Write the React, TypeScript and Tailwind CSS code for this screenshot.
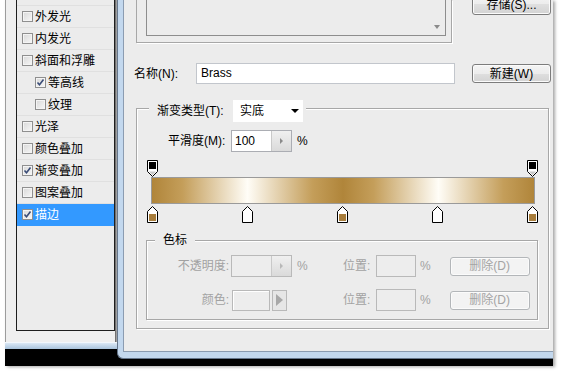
import clsx from "clsx";
import type { ReactNode } from "react";

const layers = [
  { label: "外发光" },
  { label: "内发光" },
  { label: "斜面和浮雕" },
  { label: "等高线", sub: true, checked: true },
  { label: "纹理", sub: true },
  { label: "光泽" },
  { label: "颜色叠加" },
  { label: "渐变叠加", checked: true },
  { label: "图案叠加" },
  { label: "描边", checked: true, selected: true },
];

const brass = "#b0853a";

function CheckBox({ checked }: { checked?: boolean }) {
  return (
    <span className="flex h-[11px] w-[11px] shrink-0 items-center justify-center border border-[#8f8f8f] bg-gradient-to-br from-[#d8d8d8] to-[#f7f7f7] shadow-[inset_0_0_0_1px_#f4f4f4]">
      {checked && (
        <svg width="9" height="9" viewBox="0 0 9 9">
          <path d="M1.5 4.5 L3.5 6.8 L7.5 1.5" fill="none" stroke="#3b4d78" strokeWidth="1.6" />
        </svg>
      )}
    </span>
  );
}

function WinButton({ children, disabled, className }: { children: ReactNode; disabled?: boolean; className?: string }) {
  return (
    <div
      className={clsx(
        "flex items-center justify-center rounded-[3px] border leading-none shadow-[inset_0_0_0_1px_#fbfbfb]",
        disabled
          ? "border-[#b3b6b9] bg-[#f3f3f3] text-[#a4a4a4]"
          : "border-[#7c7c7c] bg-[linear-gradient(#f4f4f4,#ececec_50%,#dfdfdf_50%,#d3d3d3)] text-black",
        className
      )}
    >
      {children}
    </div>
  );
}

function OpacityStop() {
  return (
    <svg width="11" height="17" viewBox="0 0 11 17">
      <path d="M0.5 0.5 H10.5 V11.5 L5.5 16.5 L0.5 11.5 Z" fill="#fff" stroke="#000" />
      <rect x="2" y="2" width="7" height="7" fill="#000" />
      <path d="M2 11.5 H9 L5.5 15 Z" fill="#c8c8c8" />
    </svg>
  );
}

function ColorStop({ color }: { color: string }) {
  return (
    <svg width="11" height="17" viewBox="0 0 11 17">
      <path d="M5.5 0.5 L10.5 5.5 V16.5 H0.5 V5.5 Z" fill="#fff" stroke="#000" />
      <rect x="2" y="8" width="7" height="7" fill={color} />
    </svg>
  );
}

function Spinner({ disabled }: { disabled?: boolean }) {
  return (
    <div className="flex h-full w-[20px] items-center justify-center border-l border-[#c9c9c9] bg-gradient-to-b from-[#f0f0f0] to-[#dadada]">
      <span className={clsx("h-0 w-0 border-y-[3px] border-l-[3px] border-y-transparent", disabled ? "border-l-[#b8b8b8]" : "border-l-[#8a8a8a]")} />
    </div>
  );
}

export default function App() {
  return (
    <div className="h-[372px] w-[562px] overflow-hidden bg-white font-['Liberation_Sans','Noto_Sans_CJK_SC',sans-serif] text-[12px] text-black">
      <div className="ml-[5px] flex h-[366px] w-[548px] bg-black shadow-[2px_1px_3px_rgba(0,0,0,0.35)]">
        {/* layer style dialog, left part */}
        <div className="flex w-[112px] flex-col">
          <div className="flex h-[342px] border-l border-[#9c9c9c] bg-[#efefef] pl-[10px]">
            <div className="h-[331px] w-[99px] border-x border-b border-[#1e1e1e] bg-[#ececec]">
              <div className="h-[6px] border-b border-[#e0e0e0]" />
              {layers.map((l) => (
                <div
                  key={l.label}
                  className={clsx(
                    "flex h-[22px] items-center gap-[2px] border-b",
                    l.sub ? "pl-[18px]" : "pl-[5px]",
                    l.selected ? "border-[#3399ff] bg-[#3399ff] text-white" : "border-[#e0e0e0]"
                  )}
                >
                  <CheckBox checked={l.checked} />
                  <span className="text-[12px]">{l.label}</span>
                </div>
              ))}
            </div>
            <div className="h-[342px] w-[2px] bg-gradient-to-r from-[#5a5a5a] to-[#b9b9b9]" />
          </div>
          <div className="h-[7px] border-t border-[#f2f7fc] bg-gradient-to-b from-[#dbe8f5] to-[#a9c3dc]" />
        </div>

        {/* gradient editor window */}
        <div className="flex w-[436px] flex-col">
          <div className="flex h-[359px] flex-col rounded-bl-[6px] border-b border-l border-[#66778c] bg-[#c3d8ee] pb-[6px] pl-[5px]">
            <div className="flex h-[352px] flex-col border-b border-l border-[#8b9cb1] bg-[#ececec]">
              {/* presets + save */}
              <div className="flex items-start">
                <div className="ml-[12px] h-[43px] w-[316px] border-x border-b border-[#a7a7a7] shadow-[1px_1px_0_#fff]">
                  <div className="ml-[9px] flex h-[36px] w-[300px] items-end justify-end border-x border-b border-[#8d8d8d] pb-[6px] pr-[5px]">
                    <span className="h-0 w-0 border-x-[3px] border-t-[4px] border-x-transparent border-t-[#8a8a8a]" />
                  </div>
                </div>
                <WinButton className="-mt-[6px] ml-[20px] h-[21px] w-[79px]">存储(S)...</WinButton>
              </div>

              {/* name */}
              <div className="mt-[20px] flex h-[21px] items-center">
                <span className="ml-[10px] w-[62px]">名称(N):</span>
                <div className="h-[21px] w-[259px] border border-[#c2c6cc] bg-white pl-[4px] leading-[19px]">Brass</div>
                <WinButton className="ml-[17px] h-[19px] w-[79px]">新建(W)</WinButton>
              </div>

              {/* gradient group */}
              <div className="ml-[12px] mt-[24px] flex h-[221px] w-[413px] flex-col border border-[#a7a7a7] shadow-[inset_1px_1px_0_#fff,1px_1px_0_#fff]">
                <div className="-mt-[9px] ml-[12px] flex h-[22px] w-fit items-center bg-[#ececec] pl-[8px] pr-[3px]">
                  <span className="w-[76px]">渐变类型(T):</span>
                  <div className="flex h-[22px] w-[70px] items-center justify-between bg-white pl-[7px] pr-[4px]">
                    <span>实底</span>
                    <span className="h-0 w-0 border-x-[4px] border-t-[4px] border-x-transparent border-t-black" />
                  </div>
                </div>

                <div className="mt-[8px] flex h-[22px] items-center">
                  <span className="ml-[31px] w-[63px]">平滑度(M):</span>
                  <div className="flex h-[22px] w-[61px] border border-[#abadb3] bg-white">
                    <span className="flex-1 pl-[3px] leading-[20px]">100</span>
                    <Spinner />
                  </div>
                  <span className="ml-[5px]">%</span>
                </div>

                <div className="ml-[10px] mt-[8px] flex h-[17px] w-[391px] justify-between">
                  <OpacityStop />
                  <OpacityStop />
                </div>
                <div
                  className="ml-[14px] h-[27px] w-[384px] border border-[#9a9a9a]"
                  style={{
                    background: `linear-gradient(to right, ${brass} 0%, #c49e5a 8%, #fffdf7 25%, #c49e5a 42%, ${brass} 50%, #c49e5a 58%, #fffdf7 75%, #c49e5a 92%, ${brass} 100%)`,
                  }}
                />
                <div className="ml-[10px] mt-[2px] flex h-[17px] w-[391px] justify-between">
                  <ColorStop color="#a87d3c" />
                  <ColorStop color="#ffffff" />
                  <ColorStop color="#a87d3c" />
                  <ColorStop color="#ffffff" />
                  <ColorStop color="#a87d3c" />
                </div>

                {/* stops group */}
                <div className="ml-[9px] mt-[17px] flex h-[80px] w-[392px] flex-col border border-[#a7a7a7] shadow-[inset_1px_1px_0_#fff,1px_1px_0_#fff]">
                  <div className="-mt-[9px] ml-[8px] h-[16px] w-fit bg-[#ececec] px-[8px] leading-[16px]">色标</div>
                  <div className="mt-[7px] flex h-[22px] items-center text-[#a2a2a2]">
                    <span className="w-[82px] text-right">不透明度:</span>
                    <div className="ml-[2px] flex w-[112px] items-center">
                      <div className="flex h-[22px] w-[61px] border border-[#b9b9b9] bg-[#ededed]">
                        <span className="flex-1" />
                        <Spinner disabled />
                      </div>
                      <span className="ml-[5px]">%</span>
                    </div>
                    <span className="w-[33px]">位置:</span>
                    <div className="h-[22px] w-[40px] border border-[#b9b9b9] bg-[#ededed]" />
                    <span className="ml-[4px]">%</span>
                    <WinButton disabled className="ml-[19px] h-[19px] w-[80px]">删除(D)</WinButton>
                  </div>
                  <div className="mt-[12px] flex h-[22px] items-center text-[#a2a2a2]">
                    <span className="w-[82px] text-right">颜色:</span>
                    <div className="ml-[2px] flex w-[112px] items-center">
                      <div className="ml-[1px] h-[21px] w-[38px] border border-[#b9b9b9] bg-[#ededed] shadow-[inset_1px_1px_0_#fff]" />
                      <div className="ml-[2px] flex h-[21px] w-[15px] items-center justify-center border border-[#b9b9b9] bg-[#e6e6e6]">
                        <span className="h-0 w-0 border-y-[6px] border-l-[7px] border-y-transparent border-l-[#a8a8a8]" />
                      </div>
                    </div>
                    <span className="w-[33px]">位置:</span>
                    <div className="h-[22px] w-[40px] border border-[#b9b9b9] bg-[#ededed]" />
                    <span className="ml-[4px]">%</span>
                    <WinButton disabled className="ml-[19px] h-[19px] w-[80px]">删除(D)</WinButton>
                  </div>
                </div>
              </div>
            </div>
          </div>
        </div>
      </div>
    </div>
  );
}
